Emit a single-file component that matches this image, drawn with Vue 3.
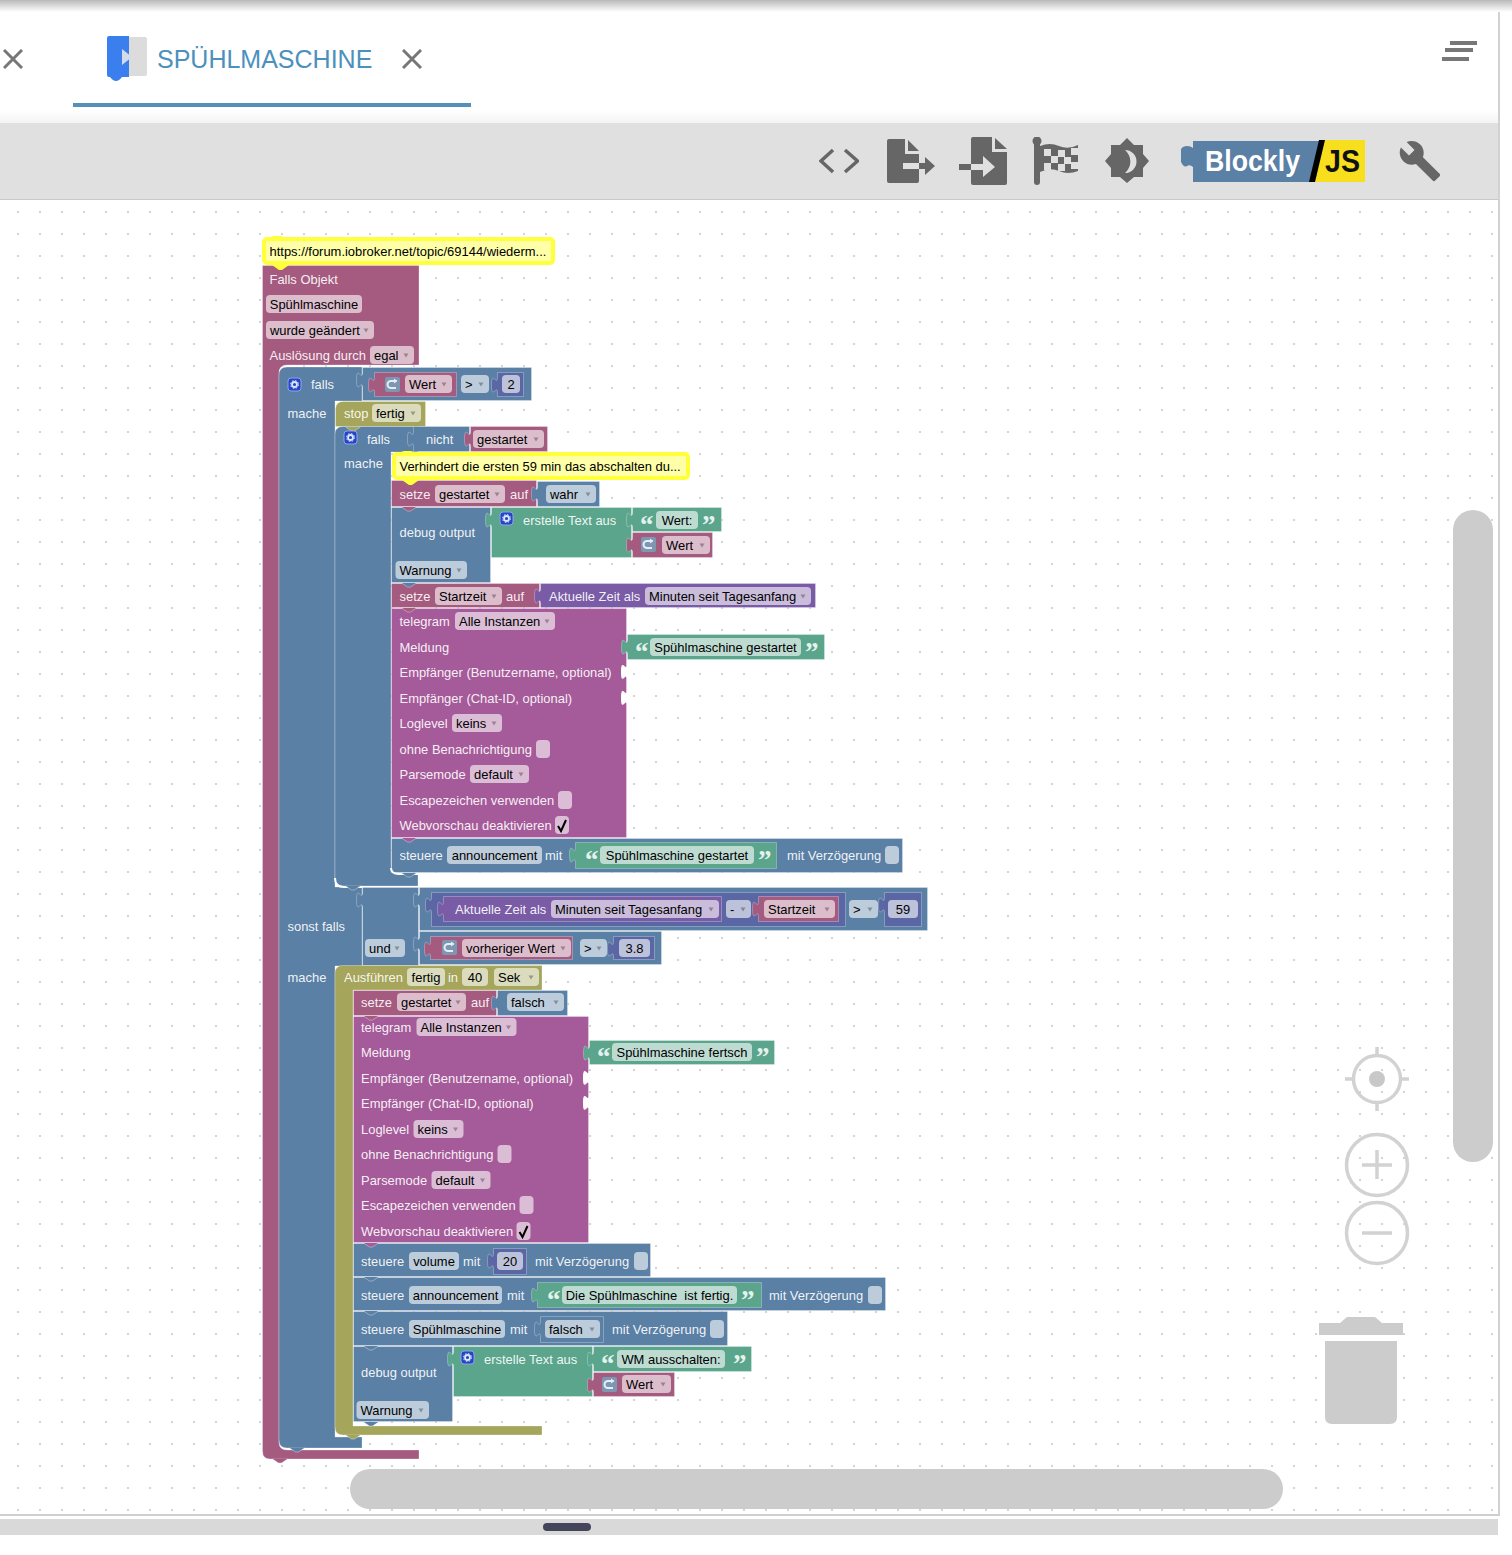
<script setup>
const C = { pink: '#a55b80', mag: '#a55b99', blue: '#5b80a5', olive: '#a5a55b', green: '#5ba58c', purple: '#7a5ba5', indigo: '#5b67a5' }

const blocks = []
const notches = []
const labels = []
const pills = []
const checks = []
const gears = []
const vars = []
const quotes = []

const notchAt = (x, y, c) => notches.push({ d: `M${x + 10.5} ${y}l6 4h3l6-4`, c })

function B(x, y, r, bot, c, o = {}) {
  const left = o.tab ? `V${y + 21}c0-10-6 8-6-8s6 2.500 6-8` : ''
  const top = o.round ? `M${x + 8.5} ${y + 0.5}H${r - 0.5}` : `M${x + 0.5} ${y + 0.5}H${r - 0.5}`
  const tail = o.round ? `H${x + 0.5}V${y + 8.5}q0-8 8-8Z` : `H${x + 0.5}${left}Z`
  blocks.push({ d: `${top}V${bot - 0.5}${tail}`, c })
  if (o.notch) notchAt(x, bot, c)
}
const D = (d, c) => blocks.push({ d, c })
const L = (x, cy, t) => labels.push({ x, y: cy + 4.6, t })
const P = (a, b, cy, t, drop = true) => pills.push({
  a, w: b - a, y: cy - 9, t, drop,
  tx: drop ? a + 4 : (a + b) / 2,
  ty: cy + 4.6,
  anchor: drop ? 'start' : 'middle',
  ax: b - 10.5, ay: cy - 1.5
})
const K = (x, cy, on = false) => checks.push({ x, y: cy - 9, on, cy })
const G = (x, y) => gears.push({ x, y })
const V = (x, y) => vars.push({ x, y })
const Q = (x, cy, t = '“') => quotes.push({ x, y: cy + 14, t })

function QText(x, cy, a, b, t, q2) { Q(x, cy); P(a, b, cy, t, false); Q(q2, cy, '”') }

function telegram(dx, ys) {
  const x = 399.5 - dx
  L(x, ys[0], 'telegram'); P(455 - dx, 555 - dx, ys[0], 'Alle Instanzen')
  L(x, ys[1], 'Meldung')
  L(x, ys[2], 'Empfänger (Benutzername, optional)')
  L(x, ys[3], 'Empfänger (Chat-ID, optional)')
  L(x, ys[4], 'Loglevel'); P(452 - dx, 502 - dx, ys[4], 'keins')
  L(x, ys[5], 'ohne Benachrichtigung'); K(536 - dx, ys[5])
  L(x, ys[6], 'Parsemode'); P(470 - dx, 529 - dx, ys[6], 'default')
  L(x, ys[7], 'Escapezeichen verwenden'); K(558 - dx, ys[7])
  L(x, ys[8], 'Webvorschau deaktivieren'); K(555 - dx, ys[8], true)
}

/* trigger */
D('M262.5 265.500H419V365H287q-8 0-8 8V1442q0 8 8 8H419V1459H270q-7.500 0-7.500-8Z', C.pink)
notchAt(262, 1459, C.pink)
/* outer if */
D('M287 367H362V401H335V887H362V966H335V1437H362V1448H287q-8 0-8-8V375q0-8 8-8Z', C.blue)
notchAt(279, 1448, C.blue)
B(362, 367, 532, 401, C.blue, { tab: true })
B(374, 372, 457, 397, C.pink, { tab: true })
B(497, 372, 524, 397, C.indigo, { tab: true })
/* stop */
B(335, 401, 426, 427, C.olive, { round: true, notch: true })
/* inner if */
D('M343 426.500H418V452H391V866q0 8 8 8H418V886H343q-8 0-8-8V434q0-7.500 8-7.500Z', C.blue)
notchAt(335, 886, C.blue)
B(413, 426, 470, 452, C.blue, { tab: true })
B(470, 426, 548, 452, C.pink, { tab: true })
/* inner stack */
B(391, 480, 537, 507, C.pink, { notch: true })
B(537, 481, 600, 507, C.blue, { tab: true })
B(391, 507, 491, 583, C.blue, { notch: true })
B(491, 507, 632, 558, C.green, { tab: true })
B(632, 507, 722, 532, C.green, { tab: true })
B(632, 532, 713, 558, C.pink, { tab: true })
B(391, 583, 540, 608, C.pink, { notch: true })
B(540, 583, 816, 608, C.purple, { tab: true })
B(391, 608, 627, 838, C.mag, { notch: true })
B(627, 634, 825, 660, C.green, { tab: true })
B(391, 838, 903, 873, C.blue, { notch: true })
B(575, 842, 777, 869, C.green, { tab: true })
/* sonst falls */
B(362, 887, 419, 966, C.blue, { tab: true })
B(419, 887, 928, 931, C.blue, { tab: true })
B(431, 892, 846, 927, C.indigo, { tab: true })
B(443, 896, 722, 922, C.purple, { tab: true })
B(758, 896, 839, 922, C.pink, { tab: true })
B(884, 892, 922, 927, C.indigo, { tab: true })
B(419, 931, 662, 965, C.blue, { tab: true })
B(430, 936, 573, 960, C.pink, { tab: true })
B(613, 936, 655, 960, C.indigo, { tab: true })
/* ausfuehren */
D('M343 965.500H542V990H353V1426H542V1435H343q-8 0-8-8V973q0-7.500 8-7.500Z', C.olive)
notchAt(335, 1435, C.olive)
B(353, 990, 497, 1016, C.pink, { notch: true })
B(497, 990, 568, 1016, C.blue, { tab: true })
B(353, 1016, 589, 1243, C.mag, { notch: true })
B(589, 1040, 775, 1065, C.green, { tab: true })
B(353, 1243, 651, 1277, C.blue, { notch: true })
B(493, 1248, 527, 1275, C.indigo, { tab: true })
B(353, 1277, 886, 1311, C.blue, { notch: true })
B(537, 1282, 762, 1308, C.green, { tab: true })
B(353, 1311, 728, 1346, C.blue, { notch: true })
B(540, 1316, 604, 1343, C.blue, { tab: true })
B(353, 1346, 453, 1422, C.blue, { notch: true })
B(453, 1346, 593, 1397, C.green, { tab: true })
B(593, 1346, 752, 1372, C.green, { tab: true })
B(593, 1372, 675, 1397, C.pink, { tab: true })

const sockets = [672, 698].map(y => `M627 ${y - 8}c0 10-6-8-6 8s6-2.500 6 8Z`)
  .concat([1078, 1103].map(y => `M589 ${y - 8}c0 10-6-8-6 8s6-2.500 6 8Z`))

/* fields */
L(269.5, 279, 'Falls Objekt')
P(266, 362, 304, 'Spühlmaschine', false)
P(266, 374, 330, 'wurde geändert')
L(269.5, 355, 'Auslösung durch'); P(370, 414, 355, 'egal')
G(288, 378); L(311, 384, 'falls')
V(385, 377); P(405, 452, 384, 'Wert')
P(461, 489, 384, '>'); P(502, 520, 384, '2', false)
L(287.5, 413, 'mache')
L(344, 413, 'stop'); P(372, 421, 413, 'fertig')
G(344, 431); L(367, 439, 'falls'); L(426, 439, 'nicht'); P(473, 544, 439, 'gestartet')
L(344, 463, 'mache')
L(399.5, 494, 'setze'); P(435, 505, 494, 'gestartet'); L(510, 494, 'auf'); P(546, 596, 494, 'wahr')
L(399.5, 532, 'debug output')
G(500, 512); L(523, 520, 'erstelle Text aus')
QText(640, 520, 656, 698, 'Wert:', 702)
V(641, 537); P(662, 710, 545, 'Wert')
P(395.5, 467, 570, 'Warnung')
L(399.5, 596, 'setze'); P(435, 502, 596, 'Startzeit'); L(506, 596, 'auf')
L(549, 596, 'Aktuelle Zeit als'); P(645, 811, 596, 'Minuten seit Tagesanfang')
telegram(0, [621, 647, 672, 698, 723, 749, 774, 800, 825])
QText(635, 647, 650, 801, 'Spühlmaschine gestartet', 805)
L(399.5, 855, 'steuere'); P(447, 542, 855, 'announcement', false); L(545, 855, 'mit')
QText(585, 855, 600, 754, 'Spühlmaschine gestartet', 758)
L(787, 855, 'mit Verzögerung'); K(885, 855)
L(287.5, 926, 'sonst falls')
P(365, 405, 948, 'und')
L(455, 909, 'Aktuelle Zeit als'); P(551, 719, 909, 'Minuten seit Tagesanfang')
P(726, 751, 909, '-'); P(764, 835, 909, 'Startzeit'); P(849, 878, 909, '>'); P(888, 918, 909, '59', false)
V(442, 940); P(462, 571, 948, 'vorheriger Wert'); P(580, 607, 948, '>'); P(619, 650, 948, '3.8', false)
L(287.5, 977, 'mache')
L(344, 977, 'Ausführen'); P(407, 445, 977, 'fertig', false); L(448, 977, 'in'); P(462, 488, 977, '40', false); P(494, 539, 977, 'Sek')
L(361, 1002, 'setze'); P(397, 466, 1002, 'gestartet'); L(471, 1002, 'auf'); P(507, 564, 1002, 'falsch')
telegram(38.5, [1027, 1052, 1078, 1103, 1129, 1154, 1180, 1205, 1231])
QText(597, 1052, 612, 752, 'Spühlmaschine fertsch', 756)
L(361, 1261, 'steuere'); P(409, 459, 1261, 'volume', false); L(463, 1261, 'mit'); P(497, 523, 1261, '20', false)
L(535, 1261, 'mit Verzögerung'); K(634, 1261)
L(361, 1295, 'steuere'); P(409, 502, 1295, 'announcement', false); L(507, 1295, 'mit')
QText(547, 1295, 562, 737, 'Die Spühlmaschine\u00a0 ist fertig.', 741)
L(769, 1295, 'mit Verzögerung'); K(868, 1295)
L(361, 1329, 'steuere'); P(409, 505, 1329, 'Spühlmaschine', false); L(510, 1329, 'mit'); P(545, 600, 1329, 'falsch')
L(612, 1329, 'mit Verzögerung'); K(710, 1329)
L(361, 1372, 'debug output')
G(461, 1351); L(484, 1359, 'erstelle Text aus')
QText(601, 1359, 617, 725, 'WM ausschalten:', 733)
V(602, 1377); P(622, 671, 1384, 'Wert')
P(356.5, 429, 1410, 'Warnung')

const flagSquares = [
  [1044, 149], [1058, 150], [1071, 148],
  [1051, 156], [1064, 157],
  [1044, 163], [1058, 164], [1071, 162]
]
</script>

<template>
  <div class="page">
    <div class="shade"></div>
    <div class="card">
      <header class="tabs">
        <svg class="x-icon first" viewBox="0 0 20 20"><path d="M1 1L19 19M19 1L1 19" /></svg>
        <div class="tab">
          <svg class="tab-logo" viewBox="0 0 40 46">
            <path d="M0 2q0-2 2-2H22V41H15q-3 4-6 4t-6-4H2q-2 0-2-2Z" fill="#3b7eed" />
            <path d="M22 1H38q2 0 2 2V38q0 2-2 2H22Z" fill="#dcdcdc" />
            <path d="M15 13L25 21L15 29Z" fill="#d3dbe8" />
          </svg>
          <span class="tab-title">SPÜHLMASCHINE</span>
          <svg class="x-icon" viewBox="0 0 20 20"><path d="M1 1L19 19M19 1L1 19" /></svg>
        </div>
        <svg class="burger" viewBox="1441 40 37 22">
          <path d="M1450 43H1477M1445 50H1473M1442 59H1469" />
        </svg>
      </header>

      <div class="toolbar">
        <svg class="tool t-code" viewBox="819 137 40 48">
          <path d="M833 150L821 161L833 172M845 150L857.500 161L845 172" fill="none" stroke="#666" stroke-width="3.500" />
        </svg>
        <svg class="tool t-export" viewBox="887 137 48 48">
          <path d="M889 139H905V154H919V181q0 2-2 2H889q-2 0-2-2V141q0-2 2-2Z" fill="#666" />
          <path d="M908 140L919 151H908Z" fill="#666" />
          <path d="M903 163H919V169H903Z" fill="#e0e0e0" />
          <path d="M919 163H925V157L935 166L925 175V169H919Z" fill="#666" />
        </svg>
        <svg class="tool t-import" viewBox="959 137 48 48">
          <path d="M973 137H992V152H1007V183q0 2-2 2H973q-2 0-2-2V139q0-2 2-2Z" fill="#666" />
          <path d="M995 138L1007 149H995Z" fill="#666" />
          <path d="M959 164H971V170H959Z" fill="#666" />
          <path d="M971 164H983V156L995 167L983 177V170H971Z" fill="#e0e0e0" />
        </svg>
        <svg class="tool t-flag" viewBox="1032 137 47 48">
          <circle cx="1037" cy="141" r="4.500" fill="#666" />
          <rect x="1034" y="142" width="6" height="43" rx="3" fill="#666" />
          <path d="M1040 146q10-4 19 0t19-1V171q-10 4-19 0t-19 1Z" fill="#666" />
          <rect v-for="(s, i) in flagSquares" :key="i" :x="s[0]" :y="s[1]" width="7" height="7" fill="#e0e0e0" />
        </svg>
        <svg class="tool t-theme" viewBox="1105 137 45 48">
          <path d="M1127 138L1134 145H1143V154L1149 161L1143 168V177H1134L1127 183L1120 177H1111V168L1105 161L1111 154V145H1120Z" fill="#666" />
          <path d="M1125 150a11.500 11.500 0 0 1 0 23a15 15 0 0 0 0-23Z" fill="#e0e0e0" />
        </svg>
        <svg class="tool t-logo" viewBox="1180 137 185 48">
          <path d="M1193 141H1320L1310 182H1193V167q-3-3-6-1t-6-4V149q2-3 6-3t6 2Z" fill="#5b80a5" />
          <path d="M1325 140H1365V182H1314Z" fill="#f7df1e" />
          <path d="M1319 140H1325L1315 182H1309Z" fill="#000" />
          <text class="logo-b" x="1205" y="171" textLength="95" lengthAdjust="spacingAndGlyphs">Blockly</text>
          <text class="logo-j" x="1325" y="172" textLength="35" lengthAdjust="spacingAndGlyphs">JS</text>
        </svg>
        <svg class="tool t-wrench" viewBox="0 0 24 24">
          <path d="M22.700 19l-9.100-9.100c.9-2.300.4-5-1.500-6.900-2-2-5-2.400-7.400-1.300L9 6 6 9 1.600 4.700C.4 7.100.9 10.100 2.900 12.100c1.900 1.900 4.600 2.400 6.900 1.500l9.100 9.100c.4.4 1 .4 1.400 0l2.300-2.300c.5-.4.5-1.100.1-1.400z" fill="#666" />
        </svg>
      </div>

      <svg class="ws" viewBox="0 200 1498 1314">
        <defs>
          <pattern id="grid" x="17" y="13" width="22" height="22" patternUnits="userSpaceOnUse">
            <rect width="2" height="2" fill="#d4d4d4" />
          </pattern>
        </defs>
        <rect x="0" y="200" width="1498" height="1314" fill="url(#grid)" />

        <path v-for="(b, i) in blocks" :key="'b' + i" class="blk" :d="b.d" :fill="b.c" />
        <path v-for="(d, i) in sockets" :key="'s' + i" :d="d" fill="#fff" />
        <path d="M391 868q0 6 8 6H418" class="gap" />
        <path d="M335 878q0 9 9 9H362" class="gap" />
        <path v-for="(n, i) in notches" :key="'n' + i" class="notch" :d="n.d" :fill="n.c" />

        <g class="comment">
          <rect x="264" y="239" width="289" height="24" rx="3" />
          <path d="M272 265l7 5h3l7-5Z" class="cn" />
          <path d="M268 238l6-2h7l6 2Z" class="cn" />
          <rect x="394" y="454" width="294" height="24" rx="3" />
          <path d="M402 480l7 5h3l7-5Z" class="cn" />
          <path d="M398 453l6-2h7l6 2Z" class="cn" />
        </g>
        <text class="ptxt" x="269.500" y="256">https://forum.iobroker.net/topic/69144/wiederm...</text>
        <text class="ptxt" x="399.500" y="471">Verhindert die ersten 59 min das abschalten du...</text>

        <text v-for="(l, i) in labels" :key="'l' + i" class="lbl" :x="l.x" :y="l.y">{{ l.t }}</text>

        <g v-for="(p, i) in pills" :key="'p' + i">
          <rect class="pill" :x="p.a" :y="p.y" :width="p.w" height="18" rx="4" />
          <text class="ptxt" :x="p.tx" :y="p.ty" :text-anchor="p.anchor">{{ p.t }}</text>
          <path v-if="p.drop" class="arrow" :d="`M${p.ax} ${p.ay}h5l-2.500 4Z`" />
        </g>

        <g v-for="(k, i) in checks" :key="'k' + i">
          <rect class="pill" :x="k.x" :y="k.y" width="14" height="18" rx="4" />
          <path v-if="k.on" class="tick" :d="`M${k.x + 3} ${k.cy + 1}l3 5l5-11`" />
        </g>

        <g v-for="(g, i) in gears" :key="'g' + i">
          <rect :x="g.x" :y="g.y" width="13" height="13" rx="3" fill="#2447c4" stroke="#8fa3ee" stroke-width="1" />
          <circle :cx="g.x + 6.5" :cy="g.y + 6.500" r="2.500" fill="none" stroke="#dfe6ff" stroke-width="1.800" />
          <circle :cx="g.x + 6.5" :cy="g.y + 6.500" r="4" fill="none" stroke="#dfe6ff" stroke-width="1" stroke-dasharray="1.600 1.540" />
        </g>

        <g v-for="(v, i) in vars" :key="'v' + i">
          <rect :x="v.x" :y="v.y" width="15" height="15" rx="2" fill="#7d97b2" />
          <path :d="`M${v.x + 11.5} ${v.y + 4}H${v.x + 6}a3.500 3.500 0 0 0 0 7H${v.x + 11}`" fill="none" stroke="#e6edf5" stroke-width="2" />
          <path :d="`M${v.x + 9} ${v.y + 1.5}l3.500 2.500l-3.500 2.500Z`" fill="#e6edf5" />
        </g>

        <text v-for="(q, i) in quotes" :key="'q' + i" class="quote" :x="q.x" :y="q.y">{{ q.t }}</text>

        <rect class="bar" x="1453" y="510" width="40" height="652" rx="20" />
        <rect class="bar" x="350" y="1469" width="933" height="40" rx="20" />

        <g class="ctrl">
          <circle cx="1377" cy="1079" r="23.500" />
          <path d="M1377 1047V1056M1377 1102V1111M1345 1079H1354M1400 1079H1409" />
          <circle cx="1377" cy="1079" r="8" class="dot" />
          <circle cx="1377" cy="1165" r="30.500" />
          <path d="M1377 1150V1179M1362 1165H1392" />
          <circle cx="1377" cy="1233" r="30.500" />
          <path d="M1362 1233H1392" />
        </g>
        <path class="bin" d="M1319 1335V1323H1340L1347 1317H1375L1382 1323H1403V1335Z" />
        <path class="bin" d="M1325 1341H1397V1417q0 7-7 7H1332q-7 0-7-7Z" />
      </svg>
    </div>
    <div class="strip"><span class="handle"></span></div>
  </div>
</template>

<style>
html, body { margin: 0; background: #fff; }
</style>

<style scoped>
.page {
  width: 1512px;
  height: 1555px;
  overflow: hidden;
  background: #fff;
  font-family: "Liberation Sans", Arial, sans-serif;
}
.shade {
  height: 12px;
  background: linear-gradient(#b9b9b9, #fff);
}
.card {
  width: 1498px;
  height: 1502px;
  display: flex;
  flex-direction: column;
  border-right: 2px solid #d2d2d2;
  border-bottom: 2px solid #cfcfcf;
}
.tabs {
  height: 111px;
  flex: none;
  display: flex;
  align-items: flex-start;
  background: linear-gradient(#fff 88%, #f4f4f4);
}
.x-icon {
  width: 20px;
  height: 20px;
  flex: none;
  fill: none;
  stroke: #777;
  stroke-width: 3;
}
.x-icon.first {
  margin: 37px 0 0 3px;
}
.tab {
  margin-left: 50px;
  width: 398px;
  height: 95px;
  box-sizing: border-box;
  padding: 24px 0 0 34px;
  display: flex;
  align-items: flex-start;
  border-bottom: 4px solid #5590b8;
}
.tab .x-icon {
  margin: 13px 49px 0 auto;
}
.tab-logo {
  width: 40px;
  height: 46px;
  flex: none;
}
.tab-title {
  margin-left: 10px;
  font-size: 25px;
  line-height: 46px;
  color: #4c90bd;
}
.burger {
  margin: 28px 0 0 970px;
  width: 37px;
  height: 22px;
  fill: none;
  stroke: #777;
  stroke-width: 4;
  flex: none;
}
.toolbar {
  height: 76px;
  flex: none;
  display: flex;
  align-items: center;
  justify-content: flex-end;
  padding-right: 56px;
  background: #e0e0e0;
  border-bottom: 1px solid #c9c9c9;
}
.tool { height: 48px; flex: none; }
.t-code { width: 40px; }
.t-export { width: 48px; margin-left: 28px; }
.t-import { width: 48px; margin-left: 24px; }
.t-flag { width: 47px; margin-left: 25px; }
.t-theme { width: 45px; margin-left: 26px; }
.t-logo { width: 185px; margin-left: 30px; }
.t-wrench { width: 44px; height: 44px; margin-left: 33px; }
.logo-b {
  font-family: "Liberation Sans", Arial, sans-serif;
  font-weight: 700;
  font-size: 30px;
  fill: #fff;
}
.logo-j {
  font-family: "Liberation Sans", Arial, sans-serif;
  font-weight: 700;
  font-size: 31px;
  fill: #111;
}
.ws {
  display: block;
  width: 1498px;
  height: 1314px;
  flex: none;
  background: #fff;
}
.blk {
  stroke: rgba(255, 255, 255, 0.28);
  stroke-width: 1;
}
.notch {
  stroke: rgba(255, 255, 255, 0.35);
  stroke-width: 1;
}
.gap {
  fill: none;
  stroke: #fff;
  stroke-width: 2;
}
.comment rect {
  fill: #ffffa8;
  stroke: #ffff3c;
  stroke-width: 4;
}
.comment .cn {
  fill: #ffff3c;
}
.lbl, .ptxt {
  font-family: "Liberation Sans", Arial, sans-serif;
  font-size: 12.950px;
}
.lbl { fill: #fff; fill-opacity: 0.92; }
.ptxt { fill: #000; }
.pill { fill: #fff; fill-opacity: 0.6; }
.arrow { fill: #000; fill-opacity: 0.3; }
.tick {
  fill: none;
  stroke: #000;
  stroke-width: 2;
}
.quote {
  font-family: "Liberation Serif", serif;
  font-weight: 700;
  font-size: 27px;
  fill: #e4f2ed;
}
.bar { fill: #ccc; }
.ctrl circle, .ctrl path {
  fill: none;
  stroke: #d2d2d2;
  stroke-width: 3.500;
}
.ctrl .dot {
  fill: #c8c8c8;
  stroke: none;
}
.bin { fill: #ccc; }
.strip {
  width: 1498px;
  height: 16px;
  margin-top: 3px;
  position: relative;
  background: #d9d9d9;
}
.handle {
  position: absolute;
  left: 543px;
  top: 4px;
  width: 48px;
  height: 8px;
  border-radius: 4px;
  background: #44445a;
}
</style>
